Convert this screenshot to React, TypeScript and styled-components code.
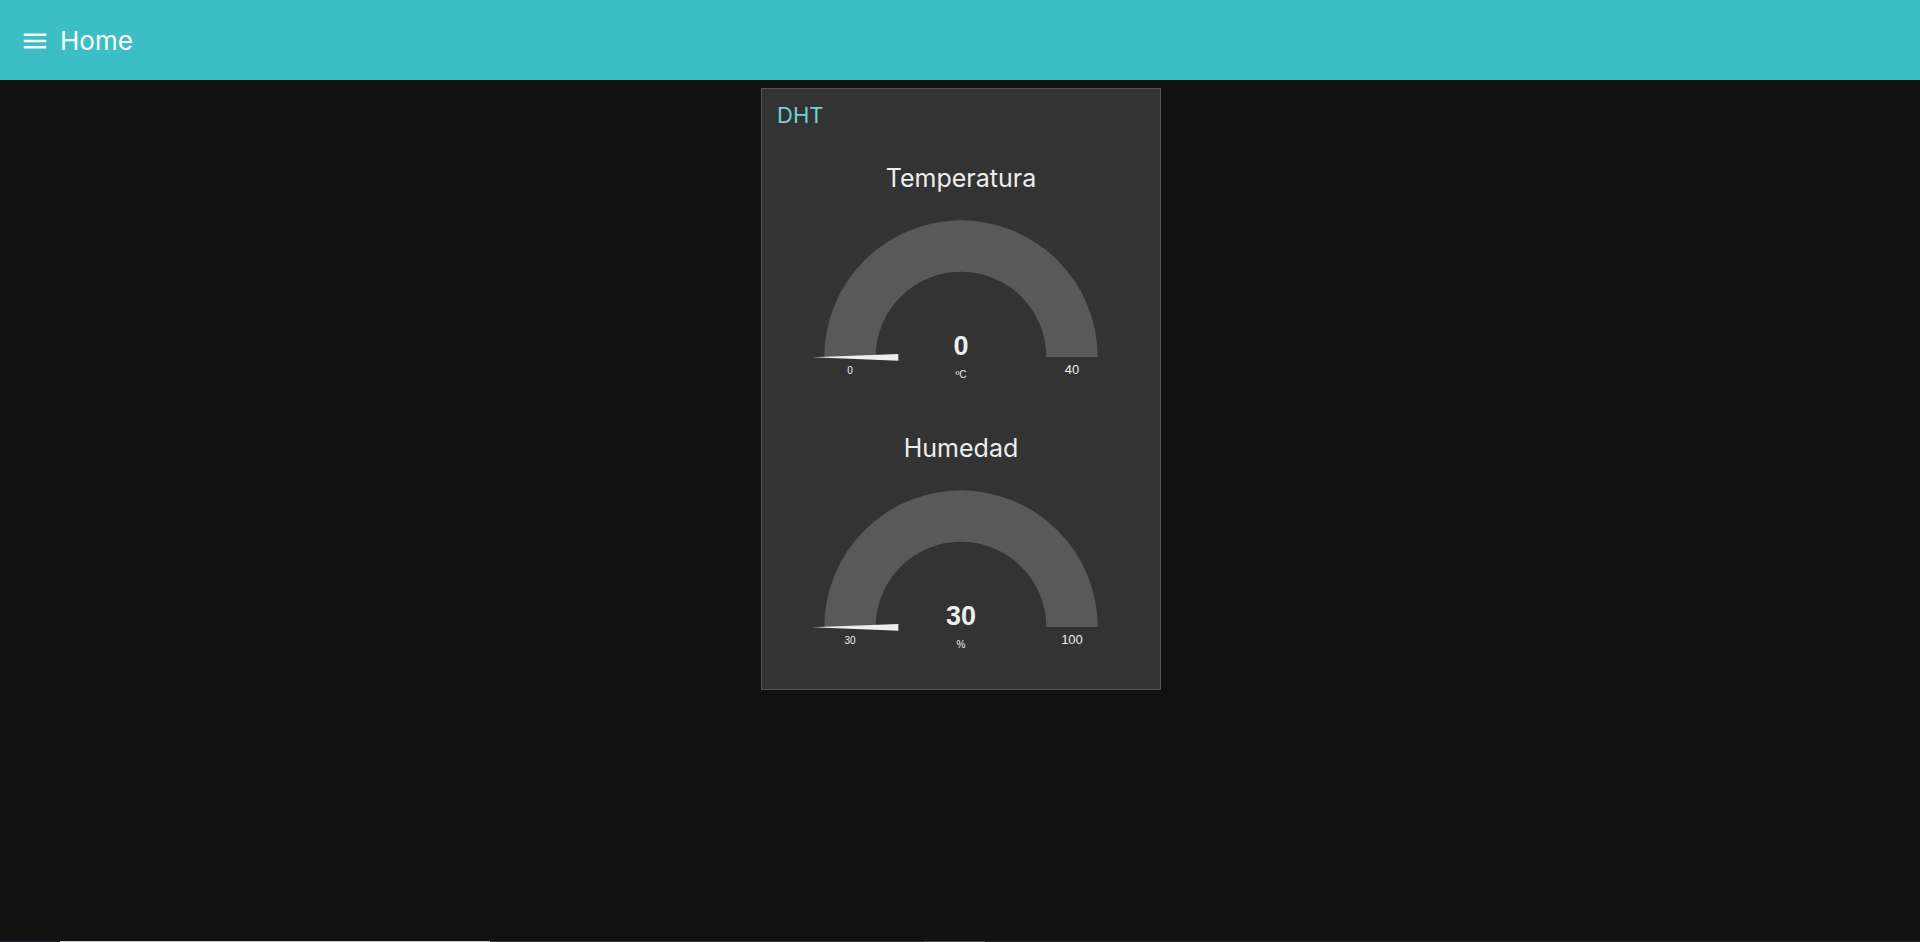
import React from "react";
import styled, { createGlobalStyle } from "styled-components";

const GlobalStyle = createGlobalStyle`
  *, *::before, *::after { box-sizing: border-box; }
  body {
    margin: 0;
    background: #111111;
    color: #eeeeee;
    font-family: "Century Gothic", Inter, "Liberation Sans", sans-serif;
  }
`;

const Page = styled.div`
  display: flex;
  flex-direction: column;
  min-height: 100vh;
`;

const Toolbar = styled.header`
  display: flex;
  align-items: center;
  gap: 10px;
  height: 80px;
  padding: 2px 20px 0;
  background: #3bbec4;
  color: #ffffff;
`;

const MenuButton = styled.button`
  display: flex;
  padding: 0;
  border: 0;
  background: none;
  color: inherit;
  cursor: pointer;
`;

const PageTitle = styled.h1`
  margin: 0;
  font-size: 26px;
  line-height: 32px;
  font-weight: 400;
`;

const Board = styled.main`
  flex: 1;
  display: flex;
  justify-content: center;
  align-items: flex-start;
  padding: 8px 6px 8px 8px;
`;

const Card = styled.section`
  width: 400px;
  max-width: 100%;
  border: 1px solid #555555;
  background: #333333;
`;

const CardTitle = styled.h2`
  margin: 0;
  padding: 10px 15px 18px;
  font-size: 22px;
  line-height: 32px;
  font-weight: 400;
  color: #6fd1d6;
`;

const GaugeBlock = styled.figure`
  display: flex;
  flex-direction: column;
  align-items: center;
  margin: 0;
  padding-top: 13px;
`;

const GaugeTitle = styled.figcaption`
  font-size: 25px;
  line-height: 32px;
`;

const Dial = styled.svg`
  display: block;
  width: 300px;
  height: 225px;
`;

const DialText = styled.text<{ $size: number; $bold?: boolean }>`
  font-family: Arial, "Liberation Sans", sans-serif;
  font-size: ${(p) => p.$size}px;
  font-weight: ${(p) => (p.$bold ? 700 : 400)};
  text-anchor: middle;
  fill: #eeeeee;
`;

const Strip = styled.footer`
  display: grid;
  grid-template-columns: 60fr 430fr 434fr 61fr 935fr;
  height: 1px;
`;

const StripPart = styled.span<{ $color: string }>`
  background: ${(p) => p.$color};
`;

interface GaugeProps {
  title: string;
  value: number;
  unit: string;
  min: number;
  max: number;
}

function Gauge({ title, value, unit, min, max }: GaugeProps) {
  const angle = ((value - min) / (max - min)) * 180;
  return (
    <GaugeBlock>
      <GaugeTitle>{title}</GaugeTitle>
      <Dial viewBox="0 1 300 225" role="img" aria-label={`${title}: ${value} ${unit}`}>
        <path d="M13.3 164A136.7 136.7 0 0 1 286.7 164H235.3A85.3 85.3 0 0 0 64.7 164Z" fill="#595959" />
        <path
          d="M1.5 164.3L87.3 161V167.8Z"
          fill="#eeeeee"
          transform={`rotate(${angle} 150 164)`}
        />
        <DialText x="150" y="162" $size={27} $bold>{value}</DialText>
        <DialText x="150" y="185" $size={10}>{unit}</DialText>
        <DialText x="39" y="181" $size={10}>{min}</DialText>
        <DialText x="261" y="181" $size={13}>{max}</DialText>
      </Dial>
    </GaugeBlock>
  );
}

export default function App() {
  return (
    <Page>
      <GlobalStyle />
      <Toolbar>
        <MenuButton type="button" aria-label="Menu">
          <svg width="30" height="30" viewBox="0 0 24 24" fill="currentColor" aria-hidden="true">
            <path d="M3 18h18v-2H3v2zm0-5h18v-2H3v2zm0-7v2h18V6H3z" />
          </svg>
        </MenuButton>
        <PageTitle>Home</PageTitle>
      </Toolbar>
      <Board>
        <Card>
          <CardTitle>DHT</CardTitle>
          <Gauge title="Temperatura" value={0} unit="ºC" min={0} max={40} />
          <Gauge title="Humedad" value={30} unit="%" min={30} max={100} />
        </Card>
      </Board>
      <Strip>
        <StripPart $color="#1f2630" />
        <StripPart $color="#c9c3c2" />
        <StripPart $color="#383535" />
        <StripPart $color="#4a4747" />
        <StripPart $color="#242222" />
      </Strip>
    </Page>
  );
}
